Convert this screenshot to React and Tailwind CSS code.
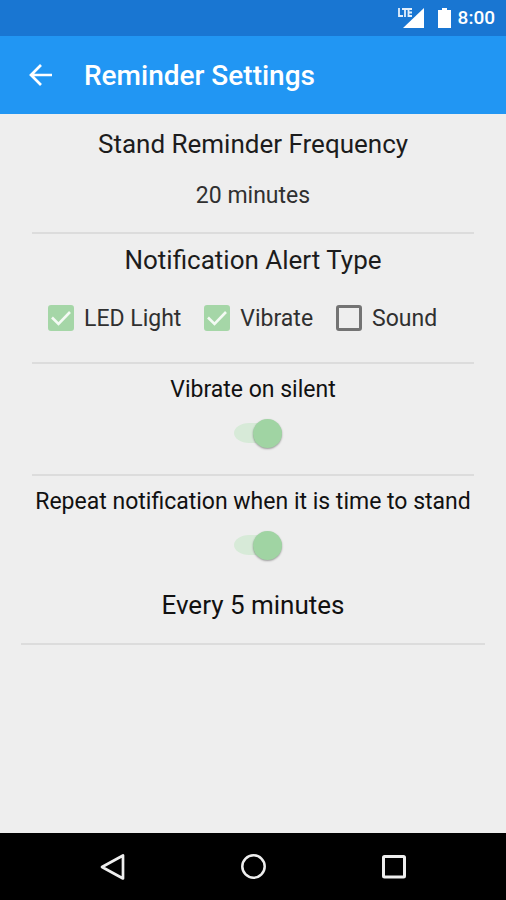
import React from "react";

function StatusBar() {
  return (
    <div className="flex h-9 items-center justify-end bg-[#1976d2] pr-[11px] text-white">
      <svg className="h-6 w-7" viewBox="0 0 28 24" aria-hidden="true">
        <path d="M26 2v20H5z" fill="#fff" />
        <path d="M0 0h15v12H0z" fill="#1976d2" />
        <path d="M1 2v8h4M4 3h6M7 3v8M14 3h-3.500v7H14M10.500 6.500H14" fill="none" stroke="#e3effb" strokeWidth="1.800" />
      </svg>
      <svg className="ml-2 h-6 w-6" viewBox="0 0 24 24" aria-hidden="true">
        <path d="M8 2h5v2h4v18H4V4h4z" fill="#fff" />
      </svg>
      <span className="text-[19px] leading-6 font-medium">8:00</span>
    </div>
  );
}

function AppBar() {
  return (
    <header className="flex h-[78px] items-center bg-[#2196f3] pl-6 text-white">
      <button type="button" aria-label="Back" className="size-8">
        <svg className="size-8" viewBox="0 0 32 32" fill="none" stroke="#fff" strokeWidth="2.700" aria-hidden="true">
          <path d="M28 16H7M17 6L7 16l10 10" />
        </svg>
      </button>
      <h1 className="ml-7 pt-[2px] text-[28px] leading-8 font-medium">Reminder Settings</h1>
    </header>
  );
}

function CheckOption({ label, defaultChecked }) {
  return (
    <label className="flex items-center gap-[10px] text-[23px] leading-8 text-[#303030]">
      <span className="grid size-[26px]">
        <input
          type="checkbox"
          defaultChecked={defaultChecked}
          className="peer col-start-1 row-start-1 size-[26px] appearance-none rounded-[3px] border-[3px] border-[#737373] checked:border-[#a5d6a7] checked:bg-[#a5d6a7]"
        />
        <svg
          className="pointer-events-none invisible col-start-1 row-start-1 size-[26px] peer-checked:visible"
          viewBox="0 0 26 26"
          fill="none"
          stroke="#f4faf4"
          strokeWidth="2.600"
          aria-hidden="true"
        >
          <path d="M4 12.500l6.500 6.500L22 7" />
        </svg>
      </span>
      <span className="pt-[2px]">{label}</span>
    </label>
  );
}

function SwitchSetting({ label }) {
  return (
    <label className="flex flex-col items-center gap-3 text-[23px] leading-8 whitespace-nowrap text-[#111]">
      {label}
      <input
        type="checkbox"
        role="switch"
        defaultChecked
        className="ml-[10px] flex h-[30px] w-12 appearance-none items-center rounded-[15px] bg-[linear-gradient(#d7ead8,#d7ead8)] bg-clip-content py-[5px] before:size-[29px] before:shrink-0 before:rounded-full before:bg-[#a0d4a3] before:shadow-[0_1px_2px_rgba(0,0,0,0.35)] checked:justify-end"
      />
    </label>
  );
}

export default function App() {
  return (
    <div className="flex min-h-screen flex-col bg-[#eee] font-['Roboto','Liberation_Sans',sans-serif]">
      <StatusBar />
      <AppBar />
      <main className="flex-1 text-center">
        <section className="mx-8 border-b-2 border-[#dcdcdc] pt-[14px] pb-5">
          <h2 className="text-[26px] leading-8 text-[#1c1c1c]">Stand Reminder Frequency</h2>
          <button type="button" className="mt-5 block w-full text-[23px] leading-8 text-[#303030]">
            20 minutes
          </button>
        </section>
        <section className="mx-8 border-b-2 border-[#dcdcdc] pt-[10px] pb-[27px]">
          <h2 className="text-[26px] leading-8 text-[#1c1c1c]">Notification Alert Type</h2>
          <div className="mt-[25px] flex gap-[23px] pl-4">
            <CheckOption label="LED Light" defaultChecked />
            <CheckOption label="Vibrate" defaultChecked />
            <CheckOption label="Sound" />
          </div>
        </section>
        <section className="mx-8 border-b-2 border-[#dcdcdc] pt-[10px] pb-[26px]">
          <SwitchSetting label="Vibrate on silent" />
        </section>
        <section className="mx-[21px] border-b-2 border-[#dcdcdc] pt-[10px] pb-[22px]">
          <SwitchSetting label="Repeat notification when it is time to stand" />
          <button type="button" className="mt-[29px] block w-full text-[26px] leading-8 text-[#111]">
            Every 5 minutes
          </button>
        </section>
      </main>
      <nav className="flex h-[67px] items-center justify-center gap-[108px] bg-black" aria-label="System">
        <button type="button" aria-label="Back" className="size-8">
          <svg className="size-8" viewBox="0 0 32 32" fill="none" stroke="#eee" strokeWidth="2.700" strokeLinejoin="round" aria-hidden="true">
            <path d="M26 4.500v23L5 16z" />
          </svg>
        </button>
        <button type="button" aria-label="Home" className="size-8">
          <svg className="size-8" viewBox="0 0 32 32" fill="none" stroke="#eee" strokeWidth="2.500" aria-hidden="true">
            <circle cx="16.500" cy="15.500" r="11.200" />
          </svg>
        </button>
        <button type="button" aria-label="Recent apps" className="size-8">
          <svg className="size-8" viewBox="0 0 32 32" fill="none" stroke="#eee" strokeWidth="3" strokeLinejoin="round" aria-hidden="true">
            <rect x="6.500" y="5.500" width="21" height="20.500" rx="1" />
          </svg>
        </button>
      </nav>
    </div>
  );
}
